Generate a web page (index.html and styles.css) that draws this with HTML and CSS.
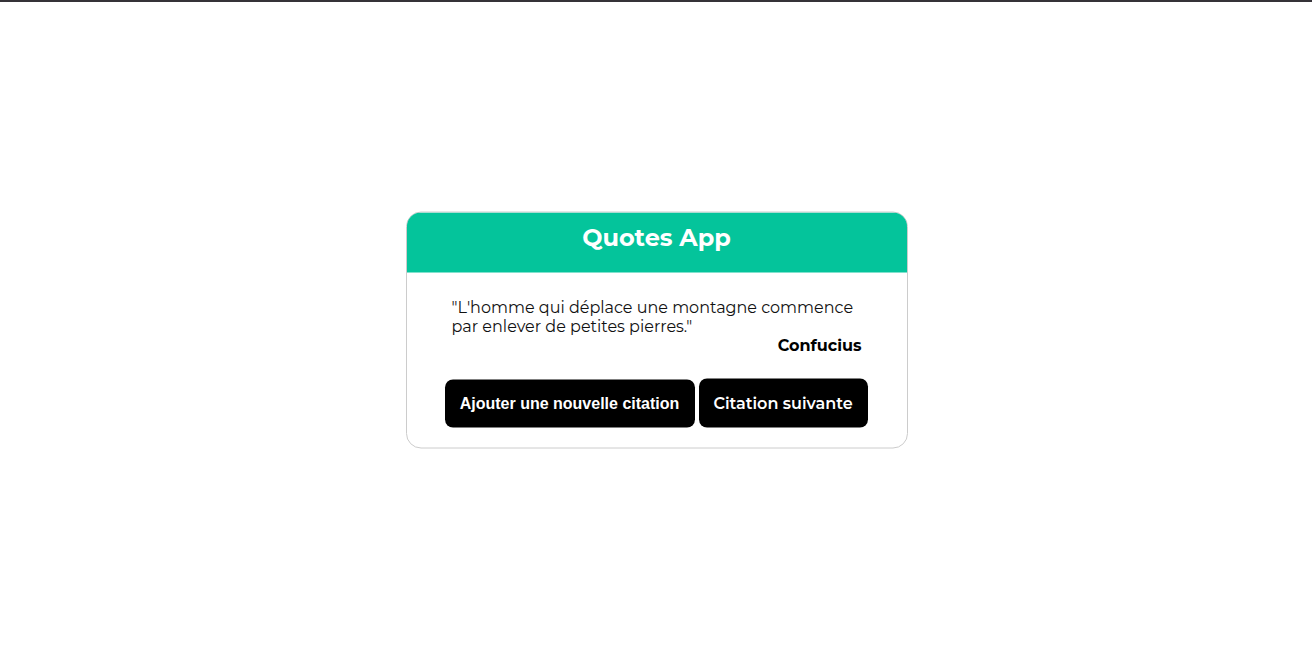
FILE: index.html
```html
<!DOCTYPE html>
<html lang="fr">
<head>
<meta charset="utf-8">
<title>Quotes App</title>
<link rel="stylesheet" href="styles.css">
</head>
<body>
<main class="card">
  <header class="card-header"><h1 class="title">Quotes App</h1></header>
  <section class="quote">
    <p class="line">"L'homme qui déplace une montagne commence</p>
    <p class="line">par enlever de petites pierres."</p>
    <p class="author">Confucius</p>
  </section>
  <div class="actions">
    <button class="btn btn-add">Ajouter une nouvelle citation</button>
    <button class="btn btn-next">Citation suivante</button>
  </div>
</main>
</body>
</html>
```
FILE: styles.css
```css
* { box-sizing: border-box; }
body {
  margin: 0;
  height: 657px;
  border-top: 2px solid #353238;
  background: #fff;
  padding-top: 209px;
  font-family: Montserrat, "Open Sans", sans-serif;
  overflow: hidden;
}
.card {
  width: 502px;
  height: 237px;
  margin-left: 406px;
  border: 1px solid #ccc;
  border-radius: 15px;
  overflow: hidden;
  transform: translateY(0.5px);
}
.card-header {
  height: 60px;
  padding: 10px 1px 0 0;
  background: #04c49b;
  text-align: center;
}
.title {
  margin: 0;
  color: #fff;
  font-size: 24px;
  line-height: 30px;
}
.quote { padding: 25px 45.5px 0 44.5px; color: #111; }
.line, .author { margin: 0; font-size: 16px; line-height: 19px; white-space: nowrap; }
.author { color: #000; font-weight: 700; text-align: right; }
.actions {
  display: flex;
  align-items: flex-end;
  gap: 4px;
  margin-top: 24px;
  padding-left: 38px;
}
.btn {
  padding: 0 1px 0 0;
  border: 0;
  border-radius: 8px;
  background: #000;
  color: #fff;
  font-size: 16px;
  font-weight: 700;
  white-space: nowrap;
}
.btn-add { width: 250px; height: 48px; font-family: "Liberation Sans", Arial, sans-serif; }
.btn-next { width: 169px; height: 49px; font-family: Montserrat, "Open Sans", sans-serif; font-weight: 600; }
```
